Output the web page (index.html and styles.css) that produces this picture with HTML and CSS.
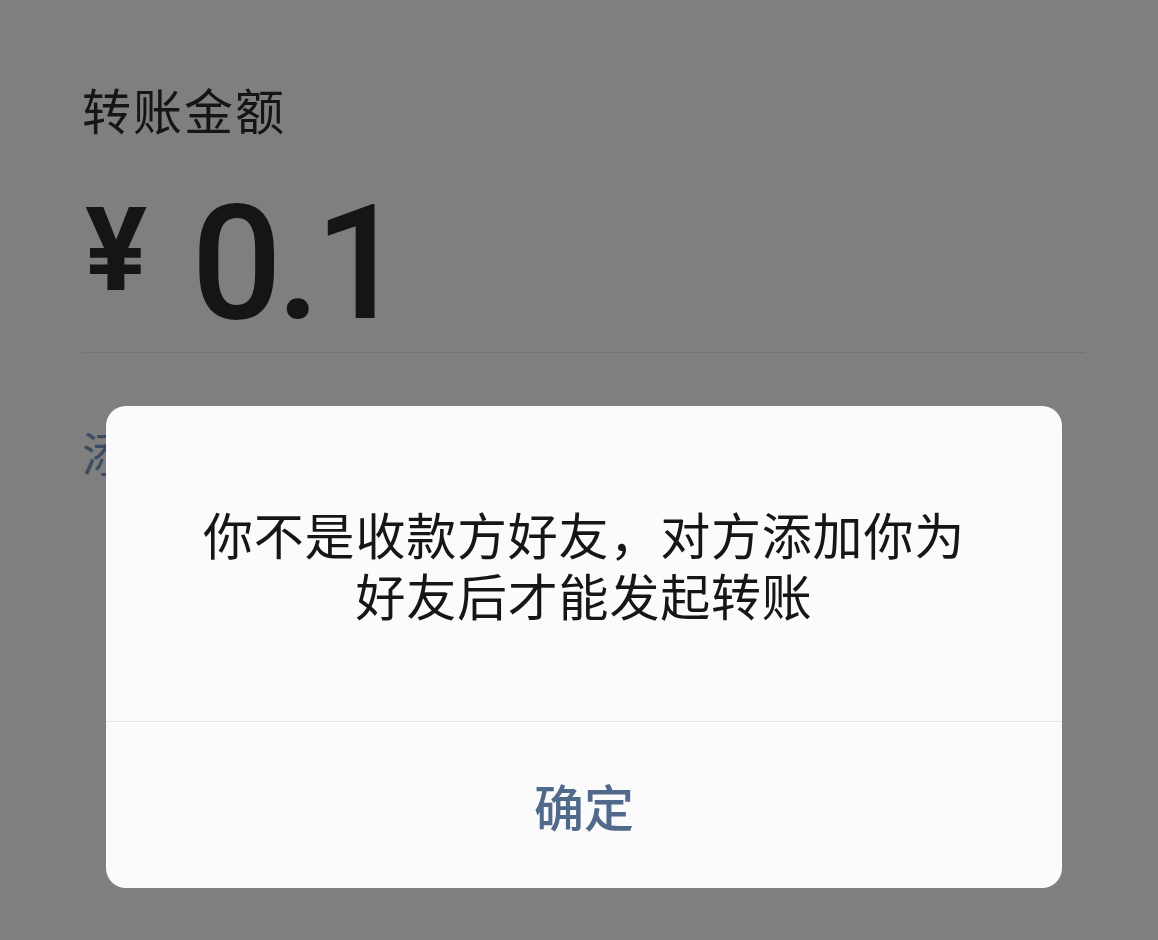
FILE: index.html
```html
<!DOCTYPE html>
<html lang="zh-CN">
<head>
    <meta charset="UTF-8">
    <meta name="viewport" content="width=device-width, initial-scale=1.0">
    <title>转账</title>
    <link rel="stylesheet" href="styles.css">
</head>
<body>
    <div class="page">
        <div class="label">转账金额</div>
        <div class="amount">
            <span class="currency">¥</span>
            <span class="value">0.1</span>
        </div>
        <div class="note-link">添加转账说明</div>
    </div>

    <div class="dialog">
        <div class="dialog-body">
            <p>你不是收款方好友，对方添加你为<br>好友后才能发起转账</p>
        </div>
        <div class="dialog-footer">
            <span class="dialog-btn">确定</span>
        </div>
    </div>
</body>
</html>
```

FILE: styles.css
```css
body {
    background-color: #7f7f7f;
    color: #151515;
    font-family: "Noto Sans CJK SC", "Noto Sans", sans-serif;
    margin: 0;
}
.page {
    width: 1003px;
    margin-left: 82px;
    padding-top: 79px;
}
.label {
    font-size: 49px;
    line-height: 60px;
    letter-spacing: 2px;
}
.amount {
    display: flex;
    align-items: flex-start;
    margin-top: 55px;
    padding-bottom: 18px;
    border-bottom: 1px solid #737373;
}
.currency {
    font-family: Roboto, "Noto Sans", sans-serif;
    font-weight: 700;
    font-size: 116px;
    line-height: 112px;
    margin-top: 0;
    margin-left: 3px;
    margin-right: 44px;
}
.value {
    font-family: Roboto, "Noto Sans", sans-serif;
    font-weight: 500;
    font-size: 160px;
    line-height: 140px;
    letter-spacing: -6px;
}
.note-link {
    display: inline-block;
    color: #3b4b62;
    font-size: 46px;
    line-height: 60px;
    margin-top: 68px;
}
.dialog {
    position: absolute;
    left: 106px;
    top: 406px;
    width: 956px;
    height: 482px;
    background: #fbfbfb;
    border-radius: 20px;
    display: flex;
    flex-direction: column;
}
.dialog-body {
    height: 315px;
    display: flex;
    align-items: center;
    justify-content: center;
    border-bottom: 1px solid #e6e6e6;
}
.dialog-body p {
    margin: 0;
    text-align: center;
    font-size: 50px;
    line-height: 61px;
    letter-spacing: 0.8px;
    color: #161616;
}
.dialog-footer {
    flex: 1;
    display: flex;
    align-items: center;
    justify-content: center;
}
.dialog-btn {
    color: #516a8c;
    font-size: 50px;
    font-weight: 500;
}
```
